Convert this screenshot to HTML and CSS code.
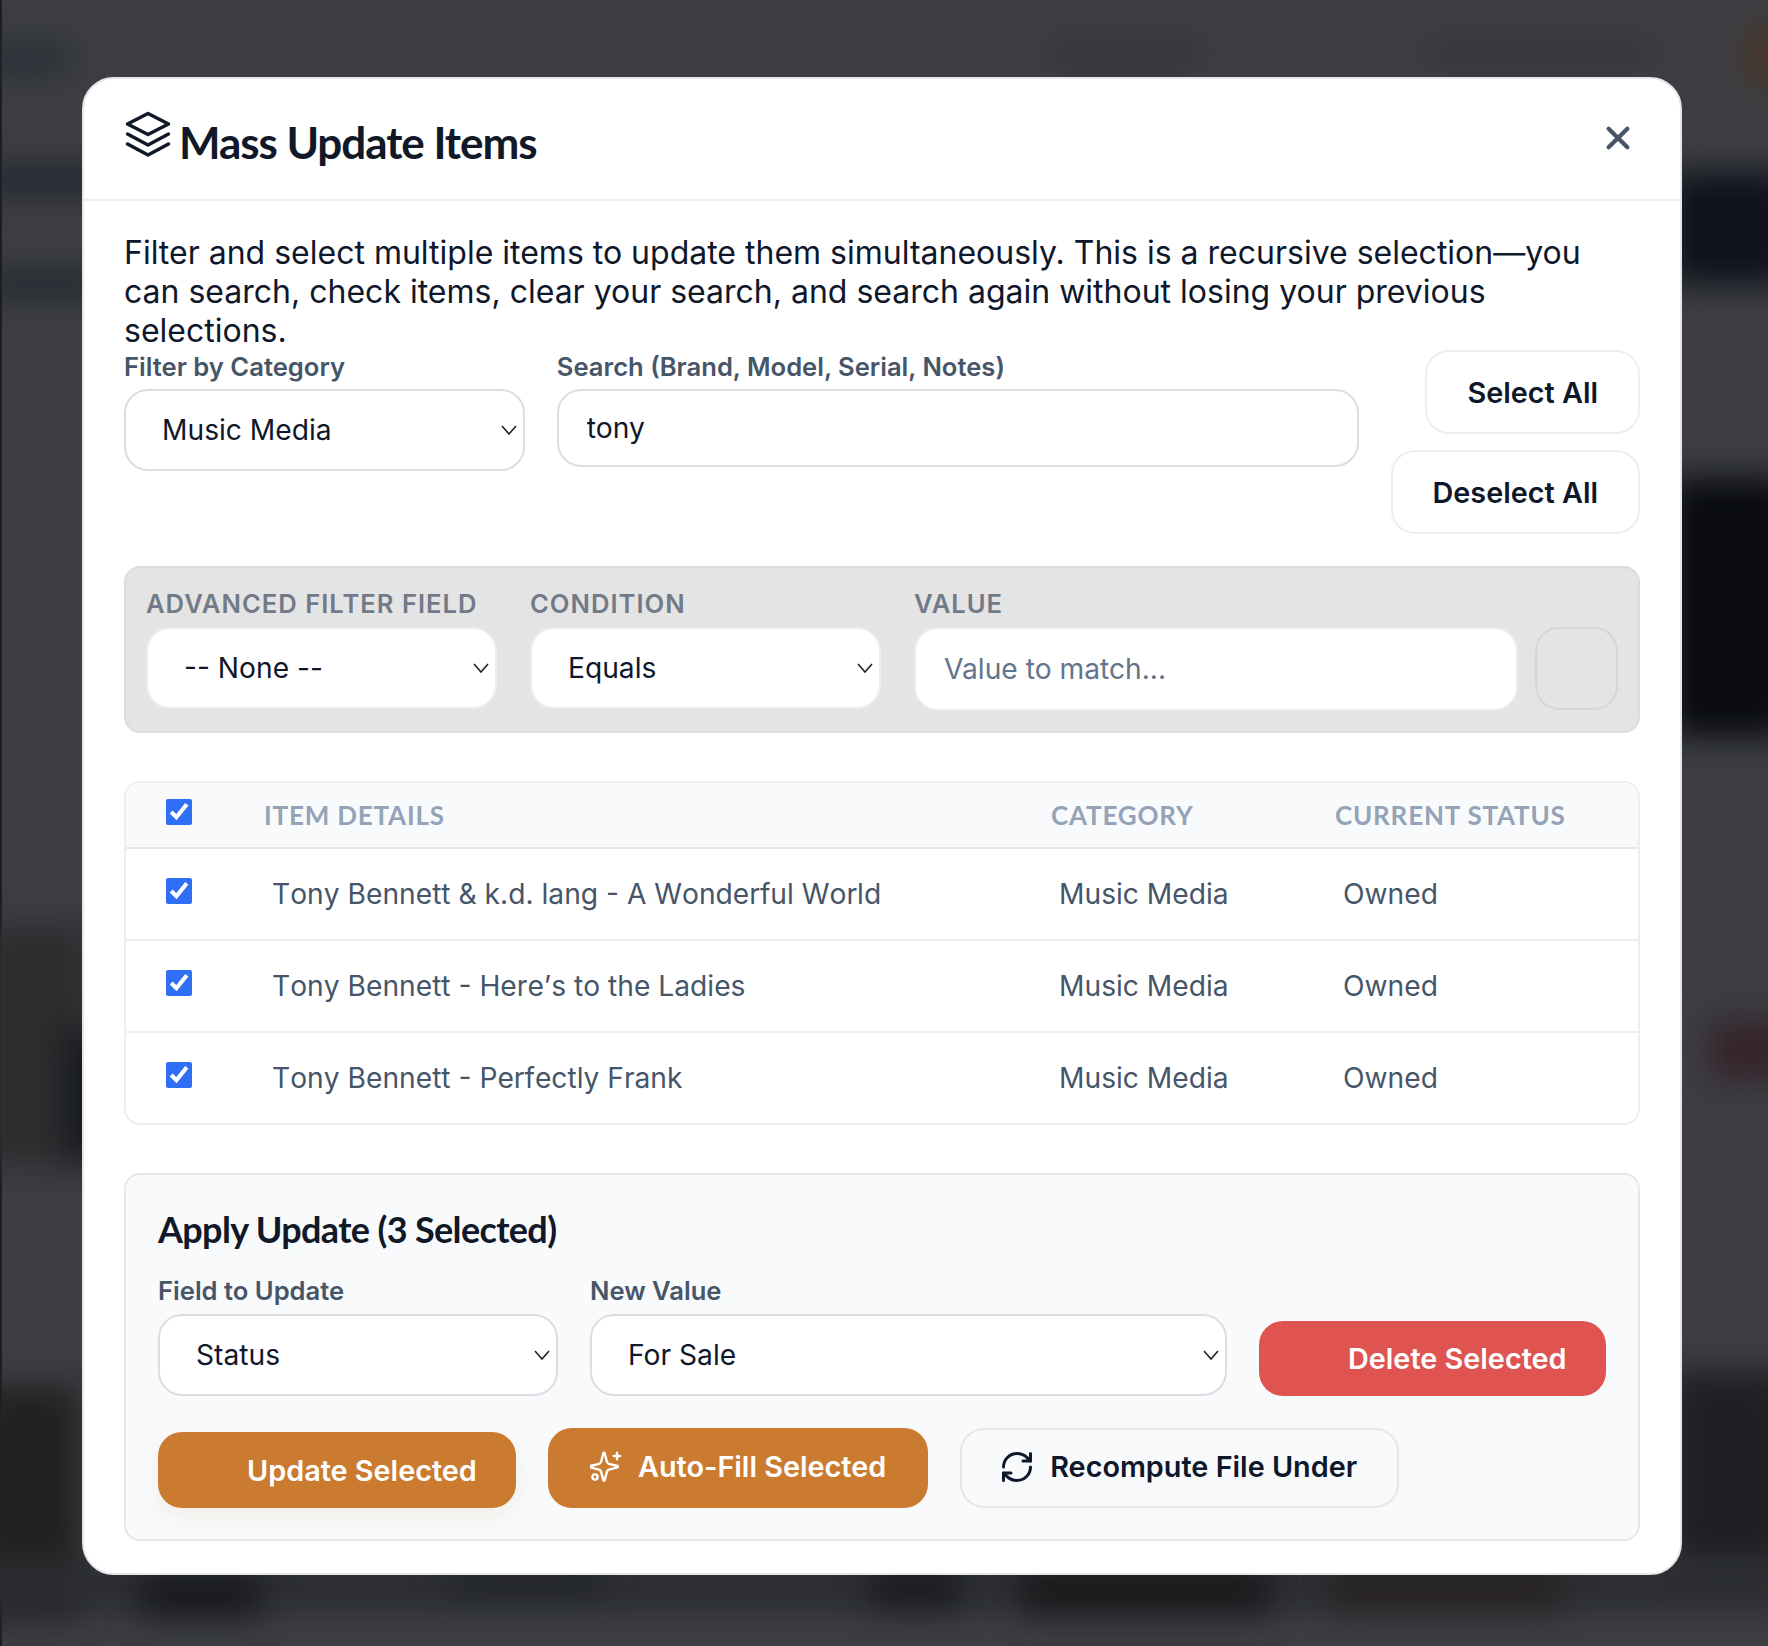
FILE: index.html
```html
<!DOCTYPE html>
<html lang="en">
<head>
    <meta charset="UTF-8">
    <title>Mass Update Items</title>
    <link rel="stylesheet" href="styles.css">
</head>
<body>
    <!-- blurred page behind the modal -->
    <div class="backdrop">
        <span class="edge-line"></span>
        <span class="blob blob-band-1"></span>
        <span class="blob blob-band-2"></span>
        <span class="blob blob-band-3"></span>
        <span class="blob blob-top-mid"></span>
        <span class="blob blob-top-right"></span>
        <span class="blob blob-orange"></span>
        <span class="blob blob-right-band"></span>
        <span class="blob blob-right-dark"></span>
        <span class="blob blob-right-red"></span>
        <span class="blob blob-right-low"></span>
        <span class="blob blob-left-warm"></span>
        <span class="blob blob-left-mid"></span>
        <span class="blob blob-left-low"></span>
        <span class="blob blob-bottom-base"></span>
        <span class="blob blob-bottom-1"></span>
        <span class="blob blob-bottom-2"></span>
        <span class="blob blob-bottom-3"></span>
        <span class="blob blob-bottom-4"></span>
        <span class="blob blob-bottom-5"></span>
    </div>

    <div class="modal">
        <div class="modal-header">
            <h2 class="modal-title">
                <svg class="title-icon" viewBox="0 0 48 48" fill="none" stroke="currentColor" stroke-width="3.5" stroke-linecap="round" stroke-linejoin="round">
                    <path d="M24 3.5 44.5 14 24 24.5 3.5 14Z"/>
                    <path d="M3.5 24 24 35 44.5 24"/>
                    <path d="M3.5 34 24 45 44.5 34"/>
                </svg>
                Mass Update Items
            </h2>
            <button class="close-btn" aria-label="Close">
                <svg viewBox="0 0 24 24" fill="none" stroke="currentColor" stroke-width="3.2" stroke-linecap="round"><path d="M5 5l14 14M19 5 5 19"/></svg>
            </button>
        </div>

        <div class="modal-body">
            <p class="intro">Filter and select multiple items to update them simultaneously. This is a recursive selection—you can search, check items, clear your search, and search again without losing your previous selections.</p>

            <div class="filter-row">
                <div class="field field-category">
                    <label>Filter by Category</label>
                    <select class="control"><option>Music Media</option></select>
                </div>
                <div class="field field-search">
                    <label>Search (Brand, Model, Serial, Notes)</label>
                    <input class="control search-input" type="text" value="tony">
                </div>
                <div class="select-btns">
                    <button class="btn btn-plain">Select All</button>
                    <button class="btn btn-plain">Deselect All</button>
                </div>
            </div>

            <div class="advanced">
                <div class="field adv-field">
                    <label>Advanced Filter Field</label>
                    <select class="control"><option>-- None --</option></select>
                </div>
                <div class="field adv-field">
                    <label>Condition</label>
                    <select class="control"><option>Equals</option></select>
                </div>
                <div class="field adv-value">
                    <label>Value</label>
                    <input class="control value-input" type="text" placeholder="Value to match...">
                </div>
                <button class="adv-empty" aria-label="Clear filter"></button>
            </div>

            <div class="table-wrap">
                <table class="items">
                    <colgroup>
                        <col class="col-check"><col class="col-details"><col class="col-category"><col class="col-status">
                    </colgroup>
                    <thead>
                        <tr>
                            <th><input type="checkbox" checked></th>
                            <th>Item Details</th>
                            <th>Category</th>
                            <th>Current Status</th>
                        </tr>
                    </thead>
                    <tbody>
                        <tr>
                            <td><input type="checkbox" checked></td>
                            <td class="item-name">Tony Bennett &amp; k.d. lang - A Wonderful World</td>
                            <td>Music Media</td>
                            <td>Owned</td>
                        </tr>
                        <tr>
                            <td><input type="checkbox" checked></td>
                            <td class="item-name">Tony Bennett - Here’s to the Ladies</td>
                            <td>Music Media</td>
                            <td>Owned</td>
                        </tr>
                        <tr>
                            <td><input type="checkbox" checked></td>
                            <td class="item-name">Tony Bennett - Perfectly Frank</td>
                            <td>Music Media</td>
                            <td>Owned</td>
                        </tr>
                    </tbody>
                </table>
            </div>

            <div class="apply">
                <h3 class="apply-title">Apply Update (3 Selected)</h3>
                <div class="apply-row">
                    <div class="field field-update">
                        <label>Field to Update</label>
                        <select class="control"><option>Status</option></select>
                    </div>
                    <div class="field field-new">
                        <label>New Value</label>
                        <select class="control"><option>For Sale</option></select>
                    </div>
                    <button class="btn btn-delete">Delete Selected</button>
                </div>
                <div class="action-row">
                    <button class="btn btn-update">Update Selected</button>
                    <button class="btn btn-autofill">
                        <svg class="btn-icon" viewBox="0 0 32 32" fill="none" stroke="currentColor" stroke-width="2.4" stroke-linecap="round" stroke-linejoin="round">
                            <path transform="translate(-2.8 -1.1) scale(1.4)" stroke-width="1.7" d="M9.937 15.5A2 2 0 0 0 8.5 14.063l-6.135-1.582a.5.5 0 0 1 0-.962L8.5 9.936A2 2 0 0 0 9.937 8.5l1.582-6.135a.5.5 0 0 1 .963 0L14.063 8.5A2 2 0 0 0 15.5 9.937l6.135 1.581a.5.5 0 0 1 0 .964L15.5 14.063a2 2 0 0 0-1.437 1.437l-1.582 6.135a.5.5 0 0 1-.963 0z"/>
                            <path d="M27 1.8v6.4M23.8 5h6.4"/>
                            <circle cx="5" cy="26" r="2.6"/>
                        </svg>
                        Auto-Fill Selected
                    </button>
                    <button class="btn btn-recompute">
                        <svg class="btn-icon icon-refresh" viewBox="0 0 24 24" fill="none" stroke="currentColor" stroke-width="2" stroke-linecap="round" stroke-linejoin="round">
                            <path d="M3 12a9 9 0 0 1 9-9 9.75 9.75 0 0 1 6.74 2.74L21 8"/>
                            <path d="M21 3v5h-5"/>
                            <path d="M21 12a9 9 0 0 1-9 9 9.75 9.75 0 0 1-6.74-2.74L3 16"/>
                            <path d="M8 16H3v5"/>
                        </svg>
                        Recompute File Under
                    </button>
                </div>
            </div>
        </div>
    </div>
</body>
</html>
```

FILE: styles.css
```css
* {
    box-sizing: border-box;
}

body {
    margin: 0;
    width: 1768px;
    height: 1646px;
    overflow: hidden;
    position: relative;
    background-color: #3c3e43;
    font-family: Inter, "Liberation Sans", sans-serif;
    color: #0f172a;
    padding: 77px 86px 0 82px;
}

/* Blurred page behind the modal */
.backdrop {
    position: absolute;
    top: 0;
    left: 0;
    width: 100%;
    height: 100%;
    overflow: hidden;
}

.edge-line {
    position: absolute;
    left: 0;
    top: 0;
    width: 2px;
    height: 100%;
    background-color: #1d1e22;
}

.blob {
    position: absolute;
    display: block;
    background-color: #17191f;
    filter: blur(16px);
}

.blob-band-1 { left: -20px; top: 48px; width: 90px; height: 22px; background-color: #262932; }
.blob-band-2 { left: -20px; top: 168px; width: 130px; height: 24px; background-color: #1f222b; }
.blob-band-3 { left: -20px; top: 274px; width: 130px; height: 20px; background-color: #1f222b; }
.blob-top-mid { left: 1050px; top: 45px; width: 150px; height: 18px; opacity: 0.35; }
.blob-top-right { left: 1430px; top: 45px; width: 220px; height: 18px; opacity: 0.3; }
.blob-orange { left: 1745px; top: 25px; width: 50px; height: 60px; background-color: #4a3628; }
.blob-right-band { left: 1670px; top: 172px; width: 120px; height: 112px; background-color: #10121b; }
.blob-right-dark { left: 1670px; top: 478px; width: 120px; height: 258px; background-color: #090b11; }
.blob-right-red { left: 1710px; top: 1020px; width: 80px; height: 60px; background-color: #35242a; }
.blob-right-low { left: 1670px; top: 1370px; width: 120px; height: 200px; background-color: #1f2024; }
.blob-left-warm { left: -20px; top: 925px; width: 110px; height: 240px; background-color: #2d2d2f; }
.blob-left-mid { left: 65px; top: 1030px; width: 50px; height: 130px; background-color: #171a1d; }
.blob-left-low { left: -20px; top: 1385px; width: 100px; height: 230px; background-color: #212220; }
.blob-bottom-base { left: -20px; top: 1560px; width: 1810px; height: 50px; background-color: #2b2d31; }
.blob-bottom-1 { left: 140px; top: 1575px; width: 120px; height: 40px; }
.blob-bottom-2 { left: 450px; top: 1570px; width: 150px; height: 22px; background-color: #1f2226; }
.blob-bottom-3 { left: 870px; top: 1570px; width: 90px; height: 36px; background-color: #191b1e; }
.blob-bottom-4 { left: 1020px; top: 1570px; width: 250px; height: 42px; background-color: #1c181b; }
.blob-bottom-5 { left: 1330px; top: 1570px; width: 230px; height: 36px; background-color: #262120; }

.modal {
    position: relative;
    width: 1600px;
    height: 1498px;
    background-color: #fff;
    border: 2px solid #e5e7eb;
    border-radius: 32px;
    overflow: hidden;
}

.modal-header {
    height: 122px;
    display: flex;
    align-items: flex-start;
    justify-content: space-between;
    padding: 35px 40px 0 40px;
    border-bottom: 2px solid #eceef1;
}

.modal-title {
    margin: 0;
    display: flex;
    align-items: flex-start;
    gap: 7px;
    font-family: Lato, sans-serif;
    font-size: 44px;
    line-height: 56px;
    font-weight: 700;
    letter-spacing: -1.05px;
    color: #111827;
}

.title-icon {
    width: 48px;
    height: 48px;
    margin-top: -4px;
}

.close-btn {
    border: none;
    background: none;
    padding: 0;
    width: 32px;
    height: 32px;
    margin: 8px 6px 0 0;
    color: #475569;
}

.modal-body {
    padding: 32px 40px 0 40px;
}

.intro {
    margin: 0;
    font-size: 32px;
    line-height: 39px;
    color: #0f172a;
}

.field {
    display: flex;
    flex-direction: column;
}

.field label {
    font-size: 25.6px;
    line-height: 32px;
    font-weight: 600;
    color: #475569;
    margin-bottom: 6px;
}

.control {
    width: 100%;
    height: 82px;
    font-family: Inter, sans-serif;
    font-size: 28.2px;
    color: #0f172a;
    background-color: #fff;
    border: 2px solid #dcdde3;
    border-radius: 24px;
    padding: 0 28px;
}

/* same chevron as the native select in the shot */
select.control {
    appearance: none;
    padding-left: 36px;
    background-image: url("data:image/svg+xml,%3Csvg xmlns='http://www.w3.org/2000/svg' viewBox='0 0 16 10'%3E%3Cpath d='M1 1l7 8 7-8' fill='none' stroke='%23222' stroke-width='1.6'/%3E%3C/svg%3E");
    background-repeat: no-repeat;
    background-position: right 6px center;
    background-size: 16px 10px;
}

.filter-row {
    display: flex;
    align-items: flex-start;
    gap: 32px;
    height: 215px;
    margin-top: 1px;
}

.field-category {
    width: 401px;
}

.field-search {
    width: 802px;
}

.search-input {
    height: 78px;
    outline: none;
}

.select-btns {
    flex: 1;
    display: flex;
    flex-direction: column;
    align-items: flex-end;
    gap: 16px;
    margin-top: -1px;
}

.btn {
    font-family: Inter, sans-serif;
    font-size: 28.8px;
    font-weight: 600;
    border-radius: 24px;
    display: flex;
    align-items: center;
    white-space: nowrap;
}

.btn-plain {
    height: 84px;
    padding: 0 40px;
    background-color: #fff;
    color: #0f172a;
    border: 2px solid #eceef1;
}

.advanced {
    display: flex;
    align-items: flex-start;
    gap: 33px;
    height: 167px;
    padding: 20px 20px 0 20px;
    background-color: #e4e4e4;
    border: 2px solid #dcdcdc;
    border-radius: 16px;
}

.advanced label {
    letter-spacing: 1px;
    text-transform: uppercase;
    color: #727a88;
    margin-bottom: 7px;
}

.advanced .control {
    border-color: #ededed;
}

.adv-field {
    width: 351px;
    flex-shrink: 0;
}

.adv-value {
    flex: 1;
}

.value-input {
    height: 84px;
    outline: none;
}

.value-input::placeholder {
    color: #64748b;
}

.adv-empty {
    flex-shrink: 0;
    width: 83px;
    height: 83px;
    margin: 39px 0 0 -16px;
    padding: 0;
    background-color: transparent;
    border: 2px solid #d6d6d6;
    border-radius: 24px;
}

.table-wrap {
    margin-top: 48px;
    border: 2px solid #eceef1;
    border-radius: 16px;
    overflow: hidden;
}

.items {
    width: 100%;
    border-collapse: collapse;
    table-layout: fixed;
}

.col-check { width: 130px; }
.col-details { width: 787px; }
.col-category { width: 284px; }

.items th {
    height: 65px;
    padding: 0 0 0 8px;
    text-align: left;
    background-color: #f8fafc;
    border-bottom: 2px solid #e5e7eb;
    font-family: Lato, sans-serif;
    font-size: 26px;
    font-weight: 700;
    letter-spacing: 0.8px;
    text-transform: uppercase;
    color: #94a3b8;
}

.items td {
    height: 92px;
    padding: 0 0 0 16px;
    font-size: 28.2px;
    color: #475569;
    border-bottom: 2px solid #eceef1;
}

.items .item-name {
    font-kerning: none;
}

.items tbody tr:last-child td {
    border-bottom: none;
    height: 91px;
}

.items input[type="checkbox"] {
    display: block;
    width: 26px;
    height: 26px;
    margin: -6px 0 0 40px;
    accent-color: #2f6ff5;
}

.items td:first-child,
.items th:first-child {
    padding: 0;
}

.apply {
    margin-top: 48px;
    height: 368px;
    padding: 30px 32px 0 32px;
    background-color: #f8fafc;
    border: 2px solid #e5e7eb;
    border-radius: 16px;
}

.apply label {
    margin-bottom: 7px;
}

.apply-title {
    margin: 0;
    font-family: Lato, sans-serif;
    font-size: 36px;
    line-height: 48px;
    font-weight: 700;
    letter-spacing: -0.65px;
    color: #111827;
}

.apply-row {
    display: flex;
    align-items: flex-end;
    margin-top: 22px;
    gap: 32px;
}

.field-update {
    width: 400px;
}

.field-new {
    width: 637px;
}

.btn-delete {
    height: 75px;
    width: 347px;
    padding: 0 0 0 89px;
    color: #fff;
    background-color: #df5450;
    border: none;
}

.action-row {
    display: flex;
    align-items: flex-end;
    gap: 32px;
    margin-top: 32px;
}

.btn-update {
    height: 76px;
    width: 358px;
    padding: 0 0 0 89px;
    color: #fff;
    background-color: #cb7b30;
    border: none;
    box-shadow: 0 8px 20px rgba(203, 123, 48, 0.1);
}

.btn-autofill {
    height: 80px;
    gap: 16px;
    padding: 0 42px 3px 42px;
    color: #fff;
    background-color: #cb7b30;
    border: none;
}

.btn-recompute {
    height: 80px;
    gap: 15px;
    padding: 0 40px 3px 37px;
    color: #0f172a;
    background-color: transparent;
    border: 2px solid #e5e7eb;
}

.btn-icon {
    width: 32px;
    height: 32px;
}

.icon-refresh {
    width: 36px;
    height: 36px;
}
```
